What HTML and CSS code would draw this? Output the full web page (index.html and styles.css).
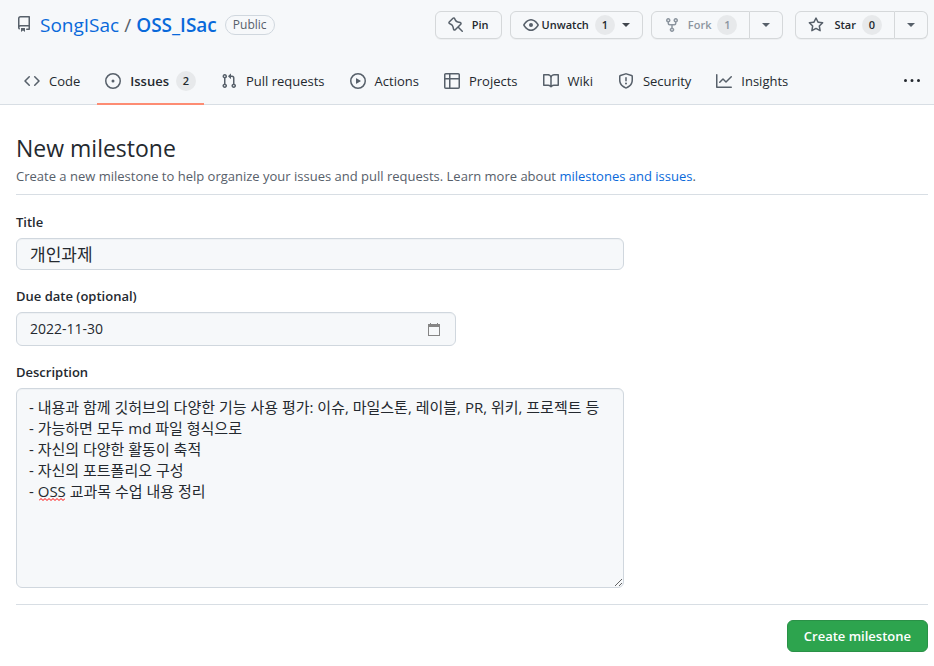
FILE: index.html
```html
<!DOCTYPE html>
<html lang="en">
<head>
<meta charset="utf-8">
<meta name="viewport" content="width=device-width, initial-scale=1">
<title>New milestone · SongISac/OSS_ISac</title>
<link rel="stylesheet" href="styles.css">
</head>
<body>
<header class="repo-header">
  <div class="repo-bar">
    <div class="repo-name">
      <svg class="icon" viewBox="0 0 16 16" aria-hidden="true"><path fill-rule="evenodd" d="M2 2.5A2.5 2.5 0 014.5 0h8.75a.75.75 0 01.75.75v12.5a.75.75 0 01-.75.75h-2.5a.75.75 0 110-1.5h1.75v-2h-8a1 1 0 00-.714 1.7.75.75 0 01-1.072 1.05A2.495 2.495 0 012 11.500v-9zm10.5-1V9h-8c-.356 0-.694.074-1 .208V2.500a1 1 0 011-1h8zM5 12.250v3.250a.25.25 0 00.4.2l1.450-1.087a.25.25 0 01.3 0L8.600 15.700a.25.25 0 00.4-.2v-3.250a.25.25 0 00-.25-.25h-3.500a.25.25 0 00-.25.25z"/></svg>
      <h2 class="repo-path"><a href="#">SongISac</a><span class="slash">/</span><a class="repo-link" href="#">OSS_ISac</a></h2>
      <span class="label">Public</span>
    </div>
    <div class="repo-actions">
      <button class="btn btn-pin" type="button"><svg class="icon" viewBox="0 0 16 16" aria-hidden="true"><path fill-rule="evenodd" d="M4.456.734a1.75 1.75 0 012.826.504l.613 1.327a3.081 3.081 0 002.084 1.707l2.454.584c1.332.317 1.800 1.972.832 2.940L11.060 10l3.720 3.720a.75.75 0 11-1.060 1.060L10 11.060l-2.204 2.205c-.968.968-2.623.5-2.940-.832l-.584-2.454a3.081 3.081 0 00-1.707-2.084l-1.327-.613a1.750 1.750 0 01-.504-2.826L4.456.734zM5.920 1.866a.25.25 0 00-.404-.072L1.794 5.516a.25.25 0 00.072.404l1.328.613A4.582 4.582 0 015.730 9.630l.584 2.454a.25.25 0 00.42.120l5.470-5.470a.25.25 0 00-.120-.420L9.630 5.730a4.581 4.581 0 01-3.098-2.537L5.920 1.866z"/></svg>Pin</button>
      <button class="btn btn-watch" type="button"><svg class="icon" viewBox="0 0 16 16" aria-hidden="true"><path fill-rule="evenodd" d="M1.679 7.932c.412-.621 1.242-1.750 2.366-2.717C5.175 4.242 6.527 3.500 8 3.500c1.473 0 2.824.742 3.955 1.715 1.124.967 1.954 2.096 2.366 2.717a.119.119 0 010 .136c-.412.621-1.242 1.750-2.366 2.717C10.825 11.758 9.473 12.500 8 12.500c-1.473 0-2.824-.742-3.955-1.715C2.920 9.818 2.090 8.690 1.679 8.068a.119.119 0 010-.136zM8 2c-1.981 0-3.670.992-4.933 2.078C1.797 5.169.88 6.423.43 7.100a1.619 1.619 0 000 1.798c.45.678 1.367 1.932 2.637 3.024C4.329 13.008 6.019 14 8 14c1.981 0 3.670-.992 4.933-2.078 1.270-1.091 2.187-2.345 2.637-3.023a1.619 1.619 0 000-1.798c-.45-.678-1.367-1.932-2.637-3.023C11.671 2.992 9.981 2 8 2zm0 8a2 2 0 100-4 2 2 0 000 4z"/></svg>Unwatch<span class="counter">1</span><span class="caret"></span></button>
      <div class="btn-group">
        <button class="btn btn-count" type="button" disabled><svg class="icon" viewBox="0 0 16 16" aria-hidden="true"><path fill-rule="evenodd" d="M5 3.250a.75.75 0 11-1.500 0 .75.75 0 011.500 0zm0 2.122a2.250 2.250 0 10-1.500 0v.878A2.250 2.250 0 005.750 8.500h1.500v2.128a2.251 2.251 0 101.500 0V8.500h1.500a2.250 2.250 0 002.250-2.250v-.878a2.250 2.250 0 10-1.500 0v.878a.75.75 0 01-.75.75h-4.500A.75.75 0 015 6.250v-.878zm3.750 7.378a.75.75 0 11-1.500 0 .75.75 0 011.500 0zm3-8.750a.75.75 0 100-1.500.75.75 0 000 1.500z"/></svg>Fork<span class="counter">1</span></button>
        <button class="btn btn-more" type="button" aria-label="See your forks"><span class="caret"></span></button>
      </div>
      <div class="btn-group btn-group-star">
        <button class="btn btn-count" type="button"><svg class="icon" viewBox="0 0 16 16" aria-hidden="true"><path fill-rule="evenodd" d="M8 .25a.75.75 0 01.673.418l1.882 3.815 4.210.612a.75.75 0 01.416 1.279l-3.046 2.970.719 4.192a.75.75 0 01-1.088.791L8 12.347l-3.766 1.980a.75.75 0 01-1.088-.790l.72-4.194L.818 6.374a.75.75 0 01.416-1.280l4.210-.611L7.327.668A.75.75 0 018 .25zm0 2.445L6.615 5.500a.75.75 0 01-.564.410l-3.097.450 2.240 2.184a.75.75 0 01.216.664l-.528 3.084 2.769-1.456a.75.75 0 01.698 0l2.770 1.456-.53-3.084a.75.75 0 01.216-.664l2.240-2.183-3.096-.450a.75.75 0 01-.564-.410L8 2.694z"/></svg>Star<span class="counter">0</span></button>
        <button class="btn btn-more" type="button" aria-label="Add to a list"><span class="caret"></span></button>
      </div>
    </div>
  </div>
  <nav class="tabs" aria-label="Repository">
    <a class="tab" href="#"><svg class="icon" viewBox="0 0 16 16" aria-hidden="true"><path fill-rule="evenodd" d="M4.720 3.220a.75.75 0 011.060 1.060L2.060 8l3.720 3.720a.75.75 0 11-1.060 1.060L.47 8.530a.75.75 0 010-1.060l4.250-4.250zm6.560 0a.75.75 0 10-1.060 1.060L13.940 8l-3.720 3.720a.75.75 0 101.060 1.060l4.250-4.250a.75.75 0 000-1.060l-4.250-4.250z"/></svg>Code</a>
    <a class="tab selected" href="#" aria-current="page"><svg class="icon" viewBox="0 0 16 16" aria-hidden="true"><path d="M8 9.500a1.500 1.500 0 100-3 1.500 1.500 0 000 3z"/><path fill-rule="evenodd" d="M8 0a8 8 0 100 16A8 8 0 008 0zM1.500 8a6.500 6.500 0 1113 0 6.500 6.500 0 01-13 0z"/></svg>Issues<span class="counter">2</span></a>
    <a class="tab" href="#"><svg class="icon" viewBox="0 0 16 16" aria-hidden="true"><path fill-rule="evenodd" d="M7.177 3.073L9.573.677A.25.25 0 0110 .854v4.792a.25.25 0 01-.427.177L7.177 3.427a.25.25 0 010-.354zM3.750 2.500a.75.75 0 100 1.500.75.75 0 000-1.500zm-2.250.75a2.250 2.250 0 113 2.122v5.256a2.251 2.251 0 11-1.500 0V5.372A2.250 2.250 0 011.500 3.250zM11 2.500h-1V4h1a1 1 0 011 1v5.628a2.251 2.251 0 101.500 0V5A2.500 2.500 0 0011 2.500zm1 10.250a.75.75 0 111.500 0 .75.75 0 01-1.500 0zM3.750 12a.75.75 0 100 1.500.75.75 0 000-1.500z"/></svg>Pull requests</a>
    <a class="tab" href="#"><svg class="icon" viewBox="0 0 16 16" aria-hidden="true"><path fill-rule="evenodd" d="M1.500 8a6.500 6.500 0 1113 0 6.500 6.500 0 01-13 0zM8 0a8 8 0 100 16A8 8 0 008 0zM6.379 5.227A.25.25 0 006 5.442v5.117a.25.25 0 00.379.214l4.264-2.559a.25.25 0 000-.428L6.379 5.227z"/></svg>Actions</a>
    <a class="tab" href="#"><svg class="icon" viewBox="0 0 16 16" aria-hidden="true"><path fill-rule="evenodd" d="M0 1.750C0 .784.784 0 1.750 0h12.500C15.216 0 16 .784 16 1.750v12.500A1.750 1.750 0 0114.250 16H1.750A1.750 1.750 0 010 14.250V1.750zM1.500 6.500v7.750c0 .138.112.25.25.25H5v-8H1.500zM5 5H1.500V1.750a.25.25 0 01.25-.25H5V5zm1.500 1.500v8h7.750a.25.25 0 00.25-.25V6.500h-8zm8-1.500h-8V1.500h7.750a.25.25 0 01.25.25V5z"/></svg>Projects</a>
    <a class="tab" href="#"><svg class="icon" viewBox="0 0 16 16" aria-hidden="true"><path fill-rule="evenodd" d="M0 1.750A.75.75 0 01.75 1h4.253c1.227 0 2.317.59 3 1.501A3.744 3.744 0 0111.006 1h4.245a.75.75 0 01.75.75v10.500a.75.75 0 01-.75.75h-4.507a2.250 2.250 0 00-1.591.659l-.622.621a.75.75 0 01-1.060 0l-.622-.621A2.250 2.250 0 005.258 13H.75a.75.75 0 01-.75-.75V1.750zm8.755 3a2.250 2.250 0 012.250-2.250H14.500v9h-3.757c-.71 0-1.400.201-1.992.572l.004-7.322zm-1.504 7.324l.004-5.073-.002-2.253A2.250 2.250 0 005.003 2.500H1.500v9h3.757a3.750 3.750 0 011.994.574z"/></svg>Wiki</a>
    <a class="tab" href="#"><svg class="icon" viewBox="0 0 16 16" aria-hidden="true"><path fill-rule="evenodd" d="M7.467.133a1.750 1.750 0 011.066 0l5.250 1.680A1.750 1.750 0 0115 3.480V7c0 1.566-.320 3.182-1.303 4.682-.983 1.498-2.585 2.813-5.032 3.855a1.700 1.700 0 01-1.330 0c-2.447-1.042-4.049-2.357-5.032-3.855C1.320 10.182 1 8.566 1 7V3.480a1.750 1.750 0 011.217-1.667l5.250-1.680zm.61 1.429a.25.25 0 00-.153 0l-5.250 1.680a.25.25 0 00-.174.238V7c0 1.358.275 2.666 1.057 3.860.784 1.194 2.121 2.340 4.366 3.297a.2.2 0 00.154 0c2.245-.956 3.582-2.104 4.366-3.298C13.225 9.666 13.500 8.360 13.500 7V3.480a.25.25 0 00-.174-.237l-5.250-1.680zM9 10.500a1 1 0 11-2 0 1 1 0 012 0zm-.25-5.750a.75.75 0 10-1.500 0v3a.75.75 0 001.500 0v-3z"/></svg>Security</a>
    <a class="tab" href="#"><svg class="icon" viewBox="0 0 16 16" aria-hidden="true"><path fill-rule="evenodd" d="M1.500 1.750a.75.75 0 00-1.500 0v12.500c0 .414.336.75.75.75h14.500a.75.75 0 000-1.500H1.500V1.750zm14.280 2.530a.75.75 0 00-1.060-1.060L10 7.940 7.530 5.470a.75.75 0 00-1.060 0L3.220 8.720a.75.75 0 001.060 1.060L7 7.060l2.470 2.470a.75.75 0 001.060 0l5.250-5.250z"/></svg>Insights</a>
    <button class="tabs-more" type="button" aria-label="More items"><svg class="icon" viewBox="0 0 16 16" aria-hidden="true"><path d="M8 9a1.500 1.500 0 100-3 1.500 1.500 0 000 3zM1.500 9a1.500 1.500 0 100-3 1.500 1.500 0 000 3zm13 0a1.500 1.500 0 100-3 1.500 1.500 0 000 3z"/></svg></button>
  </nav>
</header>
<main class="content">
  <div class="subhead">
    <h1>New milestone</h1>
    <p>Create a new milestone to help organize your issues and pull requests. Learn more about <a href="#">milestones and issues</a>.</p>
  </div>
  <form class="milestone-form">
    <div class="field">
      <label for="title">Title</label>
      <input class="control title-control" id="title" type="text" value="개인과제">
    </div>
    <div class="field">
      <label for="due">Due date (optional)</label>
      <div class="control date-control">
        <input id="due" type="text" inputmode="numeric" value="2022-11-30">
        <button type="button" class="date-button" aria-label="Show date picker"><svg viewBox="0 0 12 13" aria-hidden="true"><path fill="#858585" fill-rule="evenodd" d="M2 0h1v1h6V0h1v1h2v12H0V1h2zM1 4v8h10V4z"/></svg></button>
      </div>
    </div>
    <div class="field">
      <label for="description">Description</label>
      <div class="description-box">
        <textarea class="control" id="description" spellcheck="false">- 내용과 함께 깃허브의 다양한 기능 사용 평가: 이슈, 마일스톤, 레이블, PR, 위키, 프로젝트 등
- 가능하면 모두 md 파일 형식으로
- 자신의 다양한 활동이 축적
- 자신의 포트폴리오 구성
- OSS 교과목 수업 내용 정리</textarea>
        <svg class="squiggle" viewBox="0 0 26 3" aria-hidden="true"><path d="M0 2.500L2 .5l2 2 2-2 2 2 2-2 2 2 2-2 2 2 2-2 2 2 2-2 2 2 2-2" fill="none" stroke="#f00"/></svg>
      </div>
    </div>
    <div class="form-actions">
      <button class="submit" type="submit">Create milestone</button>
    </div>
  </form>
</main>
</body>
</html>
```
FILE: styles.css
```css
* { box-sizing: border-box; }

body {
  margin: 0;
  background: #fff;
  color: #24292f;
  font-family: "Segoe UI", "Open Sans", "Noto Sans CJK KR", sans-serif;
  font-size: 13px;
  line-height: 20px;
}

a { color: #0969da; text-decoration: none; }
button, input, textarea { font: inherit; color: inherit; margin: 0; }
button { cursor: pointer; }

.icon {
  width: 16px;
  height: 16px;
  flex: none;
  fill: #57606a;
}

.repo-header {
  background: #f6f8fa;
  border-bottom: 1px solid #d8dee4;
  padding-top: 11px;
}

.repo-bar {
  display: flex;
  justify-content: space-between;
  padding: 0 6px 0 16px;
  margin-bottom: 18px;
}

.repo-name { display: flex; align-items: center; height: 28px; }
.repo-name .icon { margin-bottom: 2px; }
.repo-path {
  display: flex;
  margin: 0 8px;
  font-size: 19px;
  font-weight: 400;
  line-height: 28px;
}
.slash { margin: 0 5px; color: #57606a; }
.repo-link { font-weight: 600; }
.label {
  padding: 0 7px;
  border: 1px solid #d0d7de;
  border-radius: 20px;
  color: #57606a;
  font-size: 12px;
  font-weight: 500;
  line-height: 18px;
}

.repo-actions { display: flex; gap: 8px; }
.btn-group { display: flex; }
.btn-group-star { margin-left: 4px; }
.btn {
  display: flex;
  align-items: center;
  height: 28px;
  padding: 0 12px;
  border: 1px solid #d5d8da;
  border-radius: 6px;
  background: #f6f8fa;
  box-shadow: 0 1px 0 rgba(27, 31, 36, 0.04);
  font-size: 11px;
  font-weight: 600;
  white-space: nowrap;
}
.btn-pin .icon { margin-right: 8px; }
.btn-watch .icon { margin-right: 3px; }
.btn-count .icon { margin-right: 8px; }
.btn-group-star .icon { margin-right: 10px; }
.btn-count { border-radius: 6px 0 0 6px; }
.btn-more { border-left: 0; border-radius: 0 6px 6px 0; }
.btn:disabled { color: #8c959f; }
.btn:disabled .icon { fill: #8c959f; }

.counter {
  min-width: 20px;
  margin-left: 6px;
  padding: 0 6px;
  border-radius: 20px;
  background: #e7e9eb;
  font-size: 11px;
  font-weight: 600;
  line-height: 20px;
  text-align: center;
}
.caret {
  border: 4px solid transparent;
  border-top-color: #57606a;
  border-bottom: 0;
}
.btn-watch .caret { margin-left: 7px; border-top-color: #40464d; }

.tabs { display: flex; gap: 9px; padding: 0 6px 0 16px; }
.tab {
  display: flex;
  align-items: center;
  height: 48px;
  margin-bottom: -1px;
  padding: 2px 8px 0;
  border-bottom: 2px solid transparent;
  color: #24292f;
  white-space: nowrap;
}
.tab .icon { margin-right: 9px; }
.tab .counter { margin-left: 7px; }
.selected { border-bottom-color: #fd8c73; font-weight: 600; }
.tabs-more {
  display: flex;
  align-items: center;
  margin-left: auto;
  padding: 0 8px;
  border: 0;
  background: none;
}
.tabs-more .icon { fill: #24292f; }

.content { padding: 27px 6px 16px 16px; }
.subhead { margin-bottom: 17px; padding-bottom: 8px; border-bottom: 1px solid #d8dee4; }
.subhead h1 { margin: 0; font-size: 23px; font-weight: 400; line-height: 32px; }
.subhead p { margin: 2px 0 0; color: #57606a; }

.field { margin-bottom: 16px; }
.field label { display: block; margin-bottom: 6px; font-weight: 600; }
.control {
  display: block;
  border: 1px solid #d0d7de;
  border-radius: 6px;
  background: #f6f8fa;
  box-shadow: inset 0 1px 0 rgba(208, 215, 222, 0.2);
}
.title-control { width: 608px; max-width: 100%; height: 32px; padding: 2px 13px 4px; font-size: 17px; }
.date-control {
  display: flex;
  align-items: center;
  width: 440px;
  max-width: 100%;
  height: 34px;
  padding: 0 15px 0 13px;
}
.date-control input { flex: 1; min-width: 0; border: 0; padding: 0; background: none; font-size: 14px; }
.date-button { display: flex; padding: 0; border: 0; background: none; }
.date-button svg { width: 12px; height: 13px; }
.description-box { position: relative; width: 608px; max-width: 100%; }
.description-box textarea { width: 100%; height: 200px; padding: 8px 12px; font-size: 15px; line-height: 21px; resize: vertical; }
.squiggle { position: absolute; left: 23px; top: 110px; width: 26px; height: 3px; }

.form-actions {
  display: flex;
  justify-content: flex-end;
  margin-top: 15px;
  padding-top: 15px;
  border-top: 1px solid #d8dee4;
}
.submit {
  height: 32px;
  padding: 0 16px;
  border: 1px solid #2a9147;
  border-radius: 6px;
  background: #2da44e;
  color: #fff;
  font-weight: 600;
}
```
